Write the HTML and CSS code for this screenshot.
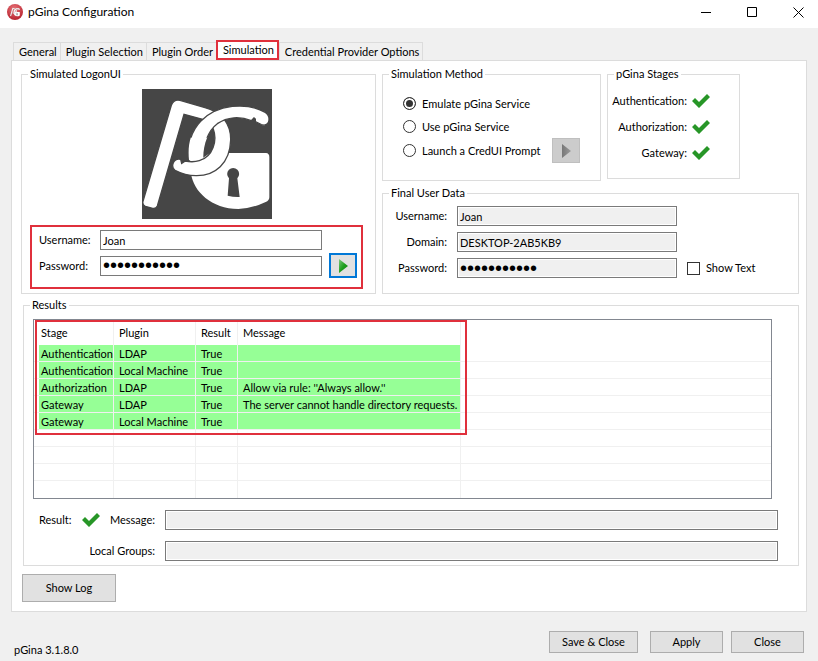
FILE: index.html
```html
<!DOCTYPE html>
<html lang="en">
<head>
<meta charset="utf-8">
<title>pGina Configuration</title>
<link rel="stylesheet" href="styles.css">
</head>
<body>
<svg class="defs" aria-hidden="true">
  <defs>
    <clipPath id="upper"><rect x="160" y="27" width="266" height="146"/></clipPath>
    <path id="shackle" d="M415 128 Q422 108 406 97 C350 66 262 72 212 124 C178 160 173 200 177 240 L220 240 C218 196 234 152 262 131 C292 110 330 108 364 122 L372 114 L376 117 L376 125 L394 134 Q409 139 415 128Z"/>
    <symbol id="pg" viewBox="36 27 390 390">
      <g fill="#fff">
        <use href="#shackle"/>
        <path d="M178 230 L210 240 L240 219 L408 219 Q418 220 418 231 L418 352 Q418 362 407 366 Q365 386 325 387 C245 387 190 335 183 280Z"/>
        <path class="gap" d="M39 364 L124 76 Q131 57 150 61 L225 83 C278 97 303 135 302 180 C300 250 255 288 198 287 C175 287 152 280 135 271 Q124 262 130 248 Q138 234 152 238 L155 250 L166 243 C180 246 195 246 208 242 C250 230 262 180 250 148 C243 130 235 124 218 118 L162 103 L82 378 Q78 387 68 385 L46 379 Q36 374 39 364Z"/>
        <use class="gap" href="#shackle" clip-path="url(#upper)"/>
      </g>
      <path class="keyhole" d="M297 295 A18 18 0 1 1 322 295 L329 351 Q311 352 293 347Z"/>
    </symbol>
    <symbol id="check" viewBox="0 0 18 14"><path fill="#279627" d="M0 7 L3 4 L7 8 L15 0 L18 3 L7 14Z"/></symbol>
    <linearGradient id="green" x1="0" y1="0" x2="1" y2="1"><stop offset="0" stop-color="#7fc67f"/><stop offset=".5" stop-color="#1fa01f"/><stop offset="1" stop-color="#0c7d0c"/></linearGradient>
    <linearGradient id="gray" x1="0" y1="0" x2="1" y2="0"><stop offset="0" stop-color="#777"/><stop offset="1" stop-color="#9a9a9a"/></linearGradient>
    <radialGradient id="red" cx=".45" cy=".3" r=".7"><stop offset="0" stop-color="#e8747a"/><stop offset="1" stop-color="#b8232e"/></radialGradient>
  </defs>
</svg>
<div class="window">
  <header class="titlebar">
    <svg class="app-icon" viewBox="0 0 16 16" aria-hidden="true"><circle cx="8" cy="8" r="8" fill="url(#red)"/><use href="#pg" x="2" y="3" width="12" height="10"/></svg>
    <h1>pGina Configuration</h1>
    <div class="window-controls">
      <button type="button" aria-label="Minimize"><svg viewBox="0 0 11 11"><path d="M0 5.5H10"/></svg></button>
      <button type="button" aria-label="Maximize"><svg viewBox="0 0 11 11"><path d="M.5 .5H9.500V9.500H.5Z"/></svg></button>
      <button type="button" aria-label="Close window"><svg viewBox="0 0 11 11"><path d="M.5 .5L10.500 10.500M10.500 .5L.5 10.500"/></svg></button>
    </div>
  </header>
  <main>
    <div class="tabs" role="tablist">
      <button type="button" role="tab">General</button>
      <button type="button" role="tab">Plugin Selection</button>
      <button type="button" role="tab">Plugin Order</button>
      <button type="button" role="tab" class="active" aria-selected="true">Simulation</button>
      <button type="button" role="tab">Credential Provider Options</button>
    </div>
    <section class="panel">
      <div class="top">
        <fieldset class="logon">
          <legend>Simulated LogonUI</legend>
          <svg class="logo" role="img" aria-label="pGina"><use href="#pg"/></svg>
          <div class="login">
            <label for="user">Username:</label>
            <input id="user" type="text" value="Joan">
            <label for="pass">Password:</label>
            <input id="pass" type="password" value="abcdefghijk">
            <button type="button" class="play" aria-label="Log on"><svg viewBox="0 0 10 14"><path fill="url(#green)" d="M1 0L10 7L1 14Z"/></svg></button>
          </div>
        </fieldset>
        <div class="side">
          <div class="side-top">
            <fieldset class="method">
              <legend>Simulation Method</legend>
              <label><input type="radio" name="method" checked>Emulate pGina Service</label>
              <label><input type="radio" name="method">Use pGina Service</label>
              <div class="prompt-row">
                <label><input type="radio" name="method">Launch a CredUI Prompt</label>
                <button type="button" class="play" disabled aria-label="Launch prompt"><svg viewBox="0 0 10 14"><path fill="url(#gray)" d="M1 0L10 7L1 14Z"/></svg></button>
              </div>
            </fieldset>
            <fieldset class="stages">
              <legend>pGina Stages</legend>
              <p>Authentication: <svg class="check"><use href="#check"/></svg></p>
              <p>Authorization: <svg class="check"><use href="#check"/></svg></p>
              <p>Gateway: <svg class="check"><use href="#check"/></svg></p>
            </fieldset>
          </div>
          <fieldset class="final">
            <legend>Final User Data</legend>
            <label for="fuser">Username:</label>
            <input id="fuser" type="text" value="Joan" readonly>
            <label for="fdomain">Domain:</label>
            <input id="fdomain" type="text" value="DESKTOP-2AB5KB9" readonly>
            <label for="fpass">Password:</label>
            <input id="fpass" type="password" value="abcdefghijk" readonly>
            <label class="show"><input type="checkbox">Show Text</label>
          </fieldset>
        </div>
      </div>
      <fieldset class="results">
        <legend>Results</legend>
        <div class="list">
          <table>
            <colgroup><col class="c-stage"><col class="c-plugin"><col class="c-result"><col class="c-message"><col></colgroup>
            <thead><tr><th>Stage</th><th>Plugin</th><th>Result</th><th>Message</th><th></th></tr></thead>
            <tbody>
              <tr class="ok"><td>Authentication</td><td>LDAP</td><td>True</td><td></td><td></td></tr>
              <tr class="ok"><td>Authentication</td><td>Local Machine</td><td>True</td><td></td><td></td></tr>
              <tr class="ok"><td>Authorization</td><td>LDAP</td><td>True</td><td>Allow via rule: ''Always allow.''</td><td></td></tr>
              <tr class="ok"><td>Gateway</td><td>LDAP</td><td>True</td><td>The server cannot handle directory requests.</td><td></td></tr>
              <tr class="ok"><td>Gateway</td><td>Local Machine</td><td>True</td><td></td><td></td></tr>
              <tr><td></td><td></td><td></td><td></td><td></td></tr>
              <tr><td></td><td></td><td></td><td></td><td></td></tr>
              <tr><td></td><td></td><td></td><td></td><td></td></tr>
              <tr><td></td><td></td><td></td><td></td><td></td></tr>
            </tbody>
          </table>
          <div class="highlight"></div>
        </div>
        <div class="summary">
          <div class="summary-label"><span>Result:</span><svg class="check"><use href="#check"/></svg><label for="msg">Message:</label></div>
          <input id="msg" type="text" readonly>
          <label for="groups">Local Groups:</label>
          <input id="groups" type="text" readonly>
        </div>
      </fieldset>
      <button type="button" class="btn log">Show Log</button>
    </section>
  </main>
  <footer>
    <span class="version">pGina 3.1.8.0</span>
    <button type="button" class="btn save">Save &amp; Close</button>
    <button type="button" class="btn apply">Apply</button>
    <button type="button" class="btn">Close</button>
  </footer>
</div>
</body>
</html>
```
FILE: styles.css
```css
* { box-sizing: border-box; }
body {
  margin: 0;
  background: #f0f0f0;
  color: #000;
  font: 11px/16px Lato, "Liberation Sans", sans-serif;
}
button, input { font: inherit; color: inherit; margin: 0; }
p, h1 { margin: 0; }
svg { display: block; }
.defs { position: absolute; width: 0; height: 0; }
.gap { stroke: #464646; stroke-width: 4px; }
.keyhole { fill: #464646; }
.window { min-height: 100vh; display: flex; flex-direction: column; }

.titlebar { height: 28px; display: flex; align-items: center; background: #fff; padding: 0 0 4px 7px; }
.titlebar h1 { flex: 1; margin-left: 5px; font-size: 12px; font-weight: 400; }
.app-icon { width: 16px; height: 16px; }
.app-icon .gap { stroke: none; }
.window-controls { display: flex; gap: 6px; }
.window-controls button { width: 40px; height: 24px; padding: 0; border: 0; background: none; display: grid; place-items: center; }
.window-controls svg { width: 11px; height: 11px; fill: none; stroke: #000; stroke-width: 1px; }

main { flex: 1; padding: 12px 11px 0; display: flex; flex-direction: column; }
.tabs { display: flex; align-items: flex-end; height: 20px; padding-left: 2px; }
.tabs button { height: 18px; padding: 1px 3px 0 5px; border: 1px solid #dcdcdc; border-width: 1px 0 0 1px; background: #f0f0f0; white-space: nowrap; line-height: 14px; }
.tabs button:last-child { border-right-width: 1px; }
.tabs .active { height: 20px; border: 2px solid #e0303c; background: #fff; padding: 0 3px 0 5px; }
.panel { flex: 1; border: 1px solid #dcdcdc; background: #fff; padding: 5px 7px 9px 9px; }

fieldset { margin: 0; padding: 0; border: 1px solid #dcdcdc; min-width: 0; }
legend { margin-left: 6px; padding: 0 2px; height: 16px; }
.top { display: grid; grid-template-columns: 355fr 417fr; gap: 6px; }
.logon { padding: 7px 12px 4px 8px; }
.logon legend { margin-left: -2px; }
.logo { width: 130px; height: 130px; margin: 0 0 6px 112px; background: #464646; }
.login { border: 2px solid #e0303c; padding: 3px 4px 9px 7px; display: grid; grid-template-columns: 54px 1fr 28px; column-gap: 7px; row-gap: 3px; align-items: center; }
.login label { grid-column: 1; }
input[type=text], input[type=password] { width: 100%; min-width: 0; height: 20px; border: 1px solid #7a7a7a; border-radius: 0; padding: 0 2px; background: #fff; outline: 0; }
input[type=password] { font: 20px/18px "Liberation Sans", sans-serif; }
input[readonly] { background: #f0f0f0 !important; box-shadow: inset 0 0 0 1px #fff; }
.play { width: 28px; height: 25px; padding: 0; border: 2px solid #0078d7; background: #e1e1e1; display: grid; place-items: center; }
.play:disabled { border: 1px solid #bfbfbf; background: #ccc; }
.play svg { width: 10px; height: 14px; }

.side { display: flex; flex-direction: column; gap: 4px; }
.side-top { display: flex; gap: 6px; }
.method { flex: 0 1 219px; padding: 10px 20px 17px; }
.method legend { margin-left: -14px; }
.method label { display: flex; align-items: center; gap: 6px; height: 23px; white-space: nowrap; }
.prompt-row { display: flex; align-items: center; justify-content: space-between; }
input[type=radio], input[type=checkbox] { appearance: none; flex: none; width: 13px; height: 13px; border: 1px solid #333; background: #fff; }
input[type=radio] { border-radius: 50%; }
input[type=radio]:checked { background: #333; box-shadow: inset 0 0 0 2px #fff; }
.stages { flex: 0 1 133px; align-self: flex-start; padding: 6px 29px 12px 0; }
.stages p { height: 26px; display: flex; align-items: center; justify-content: flex-end; gap: 5px; }
.check { width: 18px; height: 14px; flex: none; }
.final { flex: 1; display: grid; grid-template-columns: 60px 220fr 111fr; column-gap: 10px; row-gap: 6px; padding: 5px 0 15px 4px; align-items: center; }
.final legend { margin-left: 2px; }
.final > label:not(.show) { grid-column: 1; text-align: right; }
.show { display: flex; align-items: center; gap: 6px; }

.results { margin: 3px 0 0 2px; padding: 6px 20px 4px 9px; }
.results legend { margin-left: -3px; }
.list { position: relative; margin-right: 6px; border: 1px solid #828790; }
table { width: 100%; border-collapse: separate; border-spacing: 0; table-layout: fixed; }
.c-stage { width: 80px; }
.c-plugin { width: 82px; }
.c-result { width: 42px; }
.c-message { width: 223px; }
th, td { padding: 0 0 0 5px; text-align: left; font-weight: 400; white-space: nowrap; border-right: 1px solid #f0f0f0; }
th:first-child, td:first-child { padding-left: 7px; }
th:last-child, td:last-child { border-right: 0; }
th { height: 25px; }
td { height: 17px; padding-top: 2px; line-height: 14px; border-bottom: 1px solid #f0f0f0; }
tr:last-child td { border-bottom: 0; }
.ok td:not(:last-child) { background: #96ff96; }
.ok td:first-child { background: linear-gradient(to right, #fff 5px, #96ff96 5px) !important; }
.highlight { position: absolute; left: 1px; top: 0; width: 432px; height: 115px; border: 2px solid #e0303c; }
.summary { display: grid; grid-template-columns: 122px 1fr; column-gap: 10px; row-gap: 11px; margin-top: 11px; align-items: center; text-align: right; }
.summary-label { display: flex; align-items: center; justify-content: space-between; padding-left: 6px; }

.btn { height: 22px; min-width: 73px; padding: 0 10px; border: 1px solid #adadad; background: #e1e1e1; white-space: nowrap; }
.log { display: block; width: 94px; height: 28px; margin: 8px 0 0 1px; }
footer { display: flex; align-items: flex-start; padding: 19px 14px 3px; }
.version { flex: 1; padding-top: 11px; }
.save { width: 89px; margin-right: 12px; }
.apply { margin-right: 8px; }
```
